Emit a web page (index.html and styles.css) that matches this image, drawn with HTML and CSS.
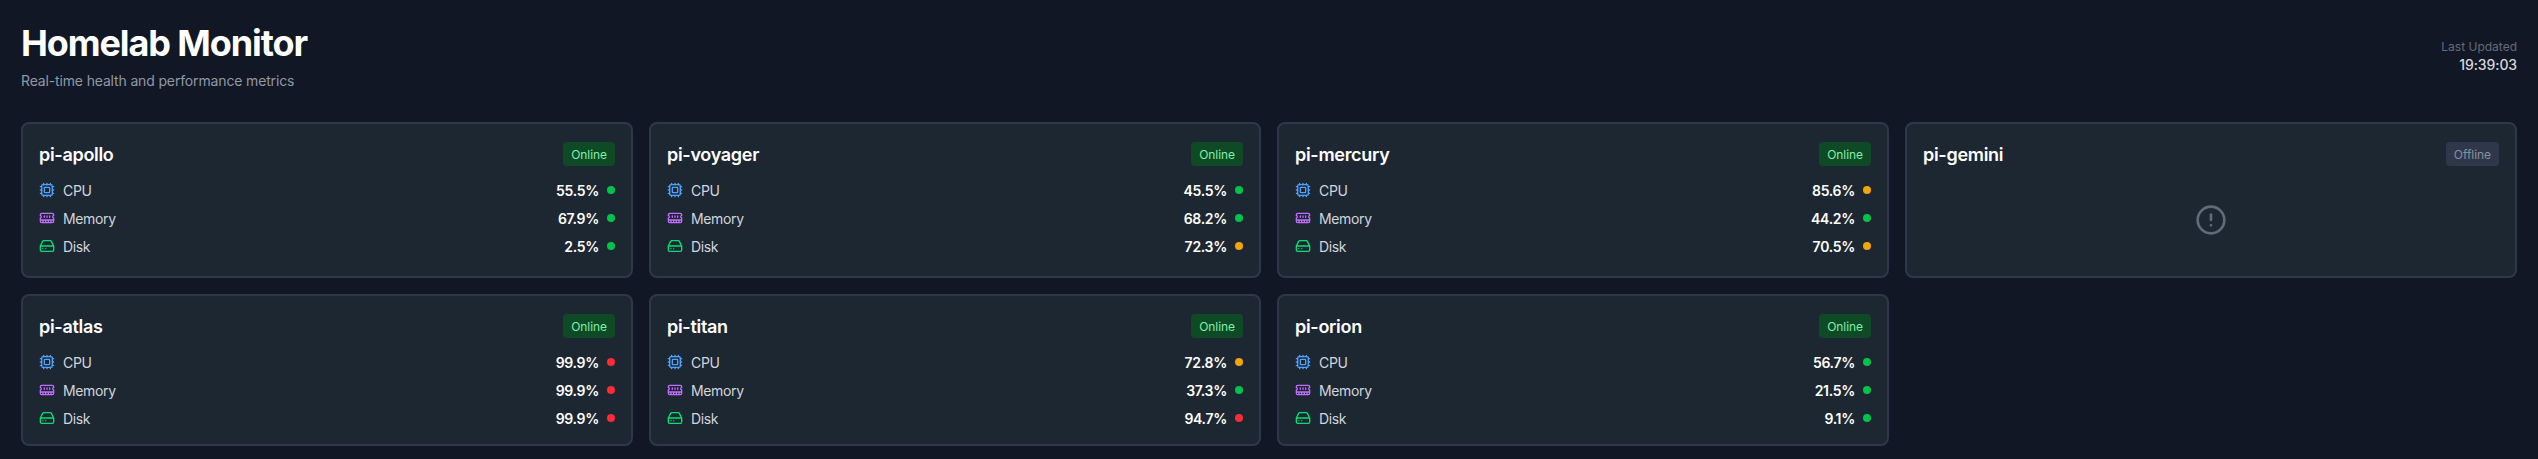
FILE: index.html
```html
<!DOCTYPE html>
<html lang="en">
<head>
<meta charset="utf-8">
<title>Homelab Monitor</title>
<link rel="stylesheet" href="styles.css">
</head>
<body>
<svg class="sprite" aria-hidden="true">
  <symbol id="cpu" viewBox="0 0 24 24"><path d="M12 20v2M12 2v2M17 20v2M17 2v2M2 12h2M2 17h2M2 7h2M20 12h2M20 17h2M20 7h2M7 20v2M7 2v2"/><rect x="4" y="4" width="16" height="16" rx="2"/><rect x="8" y="8" width="8" height="8" rx="1"/></symbol>
  <symbol id="memory" viewBox="0 0 24 24"><path d="M6 19v-3M10 19v-3M14 19v-3M18 19v-3M8 11V9M16 11V9M12 11V9M2 15h20M2 7a2 2 0 0 1 2-2h16a2 2 0 0 1 2 2v1.1a2 2 0 0 0 0 3.837V17a2 2 0 0 1-2 2H4a2 2 0 0 1-2-2v-5.1a2 2 0 0 0 0-3.837Z"/></symbol>
  <symbol id="disk" viewBox="0 0 24 24"><path d="M22 12H2M5.45 5.11 2 12v6a2 2 0 0 0 2 2h16a2 2 0 0 0 2-2v-6l-3.45-6.89A2 2 0 0 0 16.76 4H7.24a2 2 0 0 0-1.79 1.11zM6 16h.01M10 16h.01"/></symbol>
</svg>
<header class="header">
  <div>
    <h1 class="title">Homelab Monitor</h1>
    <p class="subtitle">Real-time health and performance metrics</p>
  </div>
  <div class="updated">
    <div class="updated-label">Last Updated</div>
    <div class="updated-time">19:39:03</div>
  </div>
</header>
<main class="grid" id="grid"></main>
<script src="app.js"></script>
</body>
</html>
```
FILE: styles.css
```css
* { box-sizing: border-box; margin: 0; padding: 0; }
body {
  min-height: 459px;
  padding: 23px 21px 12px;
  background: #111724;
  color: #fff;
  font-family: Inter, "Liberation Sans", sans-serif;
  font-size: 14px;
  line-height: 20px;
  overflow: hidden;
}
.sprite { display: none; }
.header { display: flex; justify-content: space-between; align-items: center; margin-bottom: 31px; }
.title { font-size: 36px; line-height: 40px; font-weight: 700; letter-spacing: -1.1px; }
.subtitle { margin-top: 8px; color: #9098a6; letter-spacing: -0.15px; }
.updated { text-align: right; }
.updated-label { font-size: 12px; line-height: 16px; color: #646b79; }
.updated-time { color: #d5d8de; font-weight: 500; letter-spacing: -0.1px; }
.grid { display: grid; grid-template-columns: repeat(4, 1fr); gap: 16px; }
.card { padding: 16px; border: 2px solid #2e384a; border-radius: 8px; background: #1d2732; }
.card-head { display: flex; justify-content: space-between; align-items: center; height: 28px; margin-bottom: 12px; }
.name { padding-top: 2px; font-size: 18px; line-height: 26px; font-weight: 600; letter-spacing: -0.3px; }
.badge { padding: 5px 8px 3px; border-radius: 4px; font-size: 12px; line-height: 16px; font-weight: 400; letter-spacing: -0.05px; }
.badge.online { background: #0f4a26; color: #7bf1a8; }
.badge.offline { background: #2e384a; color: #8790a0; }
.metrics { display: flex; flex-direction: column; gap: 8px; }
.metric { display: flex; align-items: center; gap: 8px; }
.label, .value { padding-top: 2px; line-height: 18px; }
.label { flex: 1; color: #d1d5dc; letter-spacing: -0.35px; }
.value { font-weight: 600; letter-spacing: -0.3px; }
.icon { width: 16px; height: 16px; fill: none; stroke: currentColor; stroke-width: 2; stroke-linecap: round; stroke-linejoin: round; }
.icon.cpu { color: #51a2ff; }
.icon.memory { color: #c06dff; }
.icon.disk { color: #05df72; }
.dot { width: 8px; height: 8px; border-radius: 50%; }
.dot.ok { background: #00c44a; }
.dot.warn { background: #f2a506; }
.dot.bad { background: #fb2c36; }
.down { display: flex; justify-content: center; padding: 24px 0; }
.icon.alert { width: 32px; height: 32px; color: #626a79; }
```
FILE: app.js
```javascript
const hosts = [
  ["pi-apollo", ["55.5%", "ok"], ["67.9%", "ok"], ["2.5%", "ok"]],
  ["pi-voyager", ["45.5%", "ok"], ["68.2%", "ok"], ["72.3%", "warn"]],
  ["pi-mercury", ["85.6%", "warn"], ["44.2%", "ok"], ["70.5%", "warn"]],
  ["pi-gemini"],
  ["pi-atlas", ["99.9%", "bad"], ["99.9%", "bad"], ["99.9%", "bad"]],
  ["pi-titan", ["72.8%", "warn"], ["37.3%", "ok"], ["94.7%", "bad"]],
  ["pi-orion", ["56.7%", "ok"], ["21.5%", "ok"], ["9.1%", "ok"]]
];
const kinds = [["cpu", "CPU"], ["memory", "Memory"], ["disk", "Disk"]];

const metric = ([value, state], i) => `<div class="metric">
  <svg class="icon ${kinds[i][0]}"><use href="#${kinds[i][0]}"/></svg>
  <span class="label">${kinds[i][1]}</span>
  <span class="value">${value}</span><span class="dot ${state}"></span></div>`;

const down = `<div class="down"><svg class="icon alert" viewBox="0 0 24 24">
  <circle cx="12" cy="12" r="10"/><path d="M12 8v4M12 16h.01"/></svg></div>`;

document.getElementById("grid").innerHTML = hosts.map(([name, ...m]) => `<section class="card">
  <div class="card-head"><h2 class="name">${name}</h2>
  <span class="badge ${m.length ? "online" : "offline"}">${m.length ? "Online" : "Offline"}</span></div>
  ${m.length ? `<div class="metrics">${m.map(metric).join("")}</div>` : down}
</section>`).join("");
```
